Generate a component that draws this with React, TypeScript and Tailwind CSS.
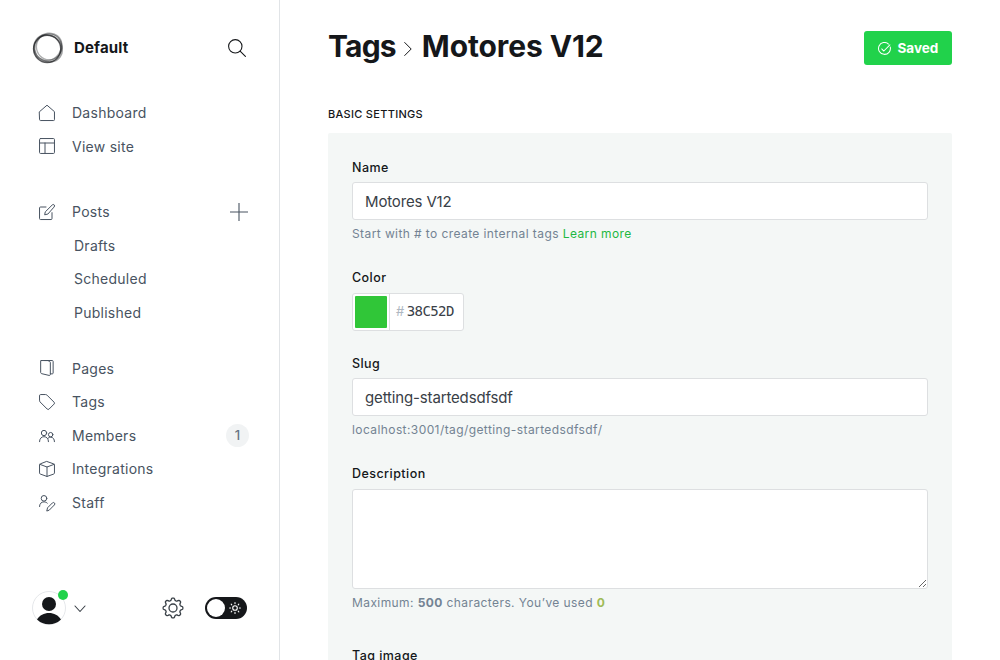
import React from 'react';

type IconProps = { children: React.ReactNode; className?: string };

function Icon({ children, className = '' }: IconProps) {
  return (
    <svg
      viewBox="0 0 24 24"
      fill="none"
      stroke="currentColor"
      strokeWidth="1.5"
      strokeLinecap="round"
      strokeLinejoin="round"
      className={`size-4 shrink-0 overflow-visible ${className}`}
    >
      {children}
    </svg>
  );
}

const icons = {
  home: <path d="M.8 10 12 .3 23.200 10v12a1.300 1.300 0 0 1-1.300 1.300H2.100A1.300 1.300 0 0 1 .8 22z" />,
  layout: (
    <>
      <rect x=".8" y=".8" width="22.400" height="22.400" rx="1.500" />
      <path d="M.8 7.500h22.400M9 7.500v15.700" />
    </>
  ),
  edit: (
    <>
      <path d="M12.800 15.200l-4.300 1 .9-4.400L19.900 1.400a2.050 2.050 0 0 1 2.900 2.900z" />
      <path d="M19.500 13v8.800a1.500 1.500 0 0 1-1.500 1.500H2.300a1.500 1.500 0 0 1-1.500-1.500V6a1.500 1.500 0 0 1 1.500-1.500h8.200" />
    </>
  ),
  pages: (
    <>
      <path d="M3.300.8h10.200l2.500 1.500c.7.300 1 .8 1 1.500v17.700c0 1.300-.8 2-2 1.600L4 20.500c-.9-.3-1.500-.9-1.500-1.700V1.600c0-.5.3-.8.8-.8z" />
      <path d="M8.500.8h11.500c.7 0 1.200.5 1.200 1.200v17.500c0 .8-.5 1.300-1.200 1.300h-3" />
    </>
  ),
  tag: <path d="M.8 2.300A1.500 1.500 0 0 1 2.300.8h7.500c.8 0 1.600.3 2.200.9l10.600 10.600a2 2 0 0 1 0 2.800l-7.500 7.500a2 2 0 0 1-2.800 0L1.700 12A3 3 0 0 1 .8 9.800z" />,
  members: (
    <>
      <circle cx="7.500" cy="7.500" r="4" />
      <path d="M.8 20.500c0-4.500 2.700-7.500 6.700-7.500s6.700 3 6.700 7.500" />
      <circle cx="17.500" cy="10" r="3.300" />
      <path d="M14 15c1-.8 2.200-1.200 3.500-1.200 3.500 0 5.700 2.700 5.700 6.700" />
    </>
  ),
  box: (
    <>
      <path d="M12 .8 22 4.300c.8.300 1.200.8 1.200 1.600v12c0 .8-.5 1.400-1.200 1.700L12 23.200 2 19.600c-.8-.3-1.200-.9-1.200-1.700v-12c0-.8.5-1.300 1.200-1.600z" />
      <path d="M1.300 5 12 9l10.700-4M12 9v14.200" />
    </>
  ),
  staff: (
    <>
      <circle cx="7.500" cy="5" r="4.200" />
      <path d="M.8 17.300c0-4.300 2.700-7 6.700-7 2 0 3.700.7 4.900 1.900" />
      <path d="M11.800 23.500l1-4.300 7.300-7.300a2.100 2.100 0 0 1 3 3L15.800 22.300z" />
    </>
  ),
};

type NavItemProps = { icon: React.ReactNode; label: string; iconClass?: string; children?: React.ReactNode };

function NavItem({ icon, label, iconClass, children }: NavItemProps) {
  return (
    <a className="flex h-[33.5px] items-center pl-[39px] pr-[30px]">
      <Icon className={iconClass}>{icon}</Icon>
      <span className="ml-[17px] flex-1 pb-[0.5px]">{label}</span>
      {children}
    </a>
  );
}

function SubItem({ label }: { label: string }) {
  return <a className="flex h-[33.5px] items-center pb-[0.5px] pl-[74px]">{label}</a>;
}

function Logo() {
  return (
    <svg viewBox="0 0 32 32" className="size-8" fill="none" stroke="#15171a">
      <circle cx="15.200" cy="16.800" r="13.600" strokeWidth="1.500" opacity=".7" />
      <ellipse cx="17.200" cy="14.800" rx="12.800" ry="13" strokeWidth="1.300" opacity=".35" />
      <ellipse cx="16.800" cy="15.500" rx="14.400" ry="12.800" strokeWidth="1.800" opacity=".35" transform="rotate(-50 16 16)" />
      <ellipse cx="16.300" cy="16.200" rx="14.700" ry="13" strokeWidth="1.500" opacity=".4" transform="rotate(35 16 16)" />
    </svg>
  );
}

const gearPath =
  Array.from({ length: 97 }, (_, i) => {
    const a = (i / 96) * Math.PI * 2;
    const r = 10.1 + 1.25 * Math.tanh(2.2 * Math.cos(8 * a));
    return `${i ? 'L' : 'M'}${(12 + r * Math.sin(a)).toFixed(2)} ${(12 - r * Math.cos(a)).toFixed(2)}`;
  }).join('') + 'Z';

function Sidebar() {
  return (
    <aside className="flex h-full w-[280px] shrink-0 flex-col border-r border-[#e1e4e7] bg-white text-[14px] tracking-[0.26px] text-[#485361]">
      <div className="flex h-24 items-center pl-8 pr-[33px]">
        <Logo />
        <span className="ml-[10px] flex-1 text-[15px] font-bold tracking-[0.15px] text-[#15171a]">Default</span>
        <svg viewBox="0 0 18 18" className="size-[18px] text-[#15171a]" fill="none" stroke="currentColor" strokeWidth="1.100" strokeLinecap="round">
          <circle cx="7.300" cy="7.300" r="6.700" />
          <path d="m12.100 12.100 5.300 5.300" />
        </svg>
      </div>
      <nav className="flex flex-1 flex-col pt-[0.25px]">
        <div>
          <NavItem icon={icons.home} label="Dashboard" />
          <NavItem icon={icons.layout} label="View site" iconClass="mb-[1.5px]" />
        </div>
        <div className="mt-8">
          <NavItem icon={icons.edit} label="Posts">
            <svg viewBox="0 0 18 18" className="mr-px size-[18px]" stroke="currentColor" strokeWidth="1.100">
              <path d="M9 0v18M0 9h18" />
            </svg>
          </NavItem>
          <SubItem label="Drafts" />
          <SubItem label="Scheduled" />
          <SubItem label="Published" />
        </div>
        <div className="mt-[22.5px]">
          <NavItem icon={icons.pages} label="Pages" iconClass="mb-[1.5px]" />
          <NavItem icon={icons.tag} label="Tags" />
          <NavItem icon={icons.members} label="Members">
            <span className="flex size-[23px] items-center justify-center rounded-full bg-[#f1f3f4] text-[13px] font-medium tracking-normal text-[#667482]">1</span>
          </NavItem>
          <NavItem icon={icons.box} label="Integrations" />
          <NavItem icon={icons.staff} label="Staff" />
        </div>
      </nav>
      <div className="flex h-[104px] items-center pl-8 pr-8 text-[#15171a]">
        <div className="relative size-[34px]">
          <svg viewBox="0 0 34 34" className="size-[34px]">
            <circle cx="17" cy="17" r="16.500" fill="#fff" stroke="#e5e7ea" />
            <circle cx="17" cy="13" r="7" fill="#15171a" />
            <path d="M5 28.500C7.600 24.300 12 22 17 22s9.400 2.300 12 6.500A17 17 0 0 1 17 33.300 17 17 0 0 1 5 28.500z" fill="#15171a" />
          </svg>
          <span className="absolute -right-[2px] -top-[1px] size-[10px] rounded-full bg-[#21d24b]" />
        </div>
        <svg viewBox="0 0 12 8" className="ml-2 mt-px h-2 w-3" fill="none" stroke="#394047" strokeWidth="1.100" strokeLinecap="round" strokeLinejoin="round">
          <path d="m1 1 5 5.500L11 1" />
        </svg>
        <svg viewBox="0 0 24 24" className="ml-[76px] size-[22px]" fill="none" stroke="#394047" strokeWidth="1.500" strokeLinejoin="round">
          <g transform="translate(12 12) scale(.95) translate(-12 -12)">
            <path d={gearPath} />
            <circle cx="12" cy="12" r="4.600" />
          </g>
        </svg>
        <span className="ml-[21px] flex h-[22px] w-[42px] items-center rounded-full bg-[#15171a] pl-0.5">
          <span className="size-[18px] rounded-full bg-white" />
          <svg viewBox="0 0 12 12" className="ml-1 size-3" fill="none" stroke="#fff" strokeWidth="1.100" strokeLinecap="round">
            <circle cx="6" cy="6" r="2.300" />
            <path d="M6 .6v1M6 10.400v1M.6 6h1M10.400 6h1M2.200 2.200l.6.6M9.200 9.200l.6.6M2.200 9.800l.6-.6M9.200 2.800l.6-.6" />
          </svg>
        </span>
      </div>
    </aside>
  );
}

function Label({ children }: { children: React.ReactNode }) {
  return <label className="block h-4 pt-px text-[12.5px] font-[550] leading-4 tracking-[0.45px] text-[#15171a]">{children}</label>;
}

function Hint({ children }: { children: React.ReactNode }) {
  return <p className="mt-1.5 h-4 whitespace-nowrap text-[12px] leading-4 tracking-[0.41px] text-[#738393]">{children}</p>;
}

const fieldClass =
  'block w-full rounded-[3px] border border-[#dddfe1] bg-white px-3 text-[15px] tracking-[-0.15px] text-[#394047] outline-none';

export default function App() {
  return (
    <div className="flex h-[660px] w-[1000px] overflow-hidden bg-white font-['Inter',sans-serif]">
      <Sidebar />
      <main className="flex-1 pl-12 pr-12">
        <header className="flex h-24 items-center justify-between">
          <h1 className="flex items-center pb-[4px] text-[30px] font-bold leading-9 text-[#15171a]">
            <span className="tracking-[-0.8px]">Tags</span>
            <svg viewBox="0 0 8 14" className="ml-[8px] mr-[10px] mt-[6px] h-[14px] w-2" fill="none" stroke="currentColor" strokeWidth="1" strokeLinecap="round" strokeLinejoin="round">
              <path d="m.7.5 6.500 6.500-6.500 6.500" />
            </svg>
            <span className="tracking-[-0.1px]">Motores V12</span>
          </h1>
          <button className="flex h-[34px] w-[88px] items-center rounded-[3px] bg-[#21d24b] pl-[14px] text-[13.5px] font-bold text-white">
            <svg viewBox="0 0 14 14" className="mr-[6.5px] size-[13px]" fill="none" stroke="currentColor" strokeWidth="1.100" strokeLinecap="round" strokeLinejoin="round">
              <path d="M13.200 5.400A6.400 6.400 0 1 1 11.300 2.200" />
              <path d="m4 7.500 2.300 2.200 6.500-6.500" />
            </svg>
            Saved
          </button>
        </header>
        <h2 className="mt-[10px] h-4 text-[11px] font-medium leading-4 tracking-[0.3px] text-[#15171a]">BASIC SETTINGS</h2>
        <section className="mt-[11px] h-[600px] rounded-[2px] bg-[#f4f7f6] px-6 pt-[26px]">
          <div className="h-[110px]">
            <Label>Name</Label>
            <input className={`${fieldClass} mt-[7px] h-[38px]`} defaultValue="Motores V12" />
            <Hint>
              Start with # to create internal tags <a className="text-[#1fb842]">Learn more</a>
            </Hint>
          </div>
          <div className="h-[86px]">
            <Label>Color</Label>
            <div className="mt-2 flex h-[38px] w-28 items-center rounded-[3px] border border-[#dddfe1] bg-white">
              <div className="flex h-full w-[37px] items-center border-r border-[#dddfe1] pl-0.5">
                <span className="size-8 rounded-[1px] bg-[#30c638]" />
              </div>
              <span className="ml-1.5 text-[13px] text-[#aeb7c1]">#</span>
              <span className="mb-px ml-[2.5px] font-['DejaVu_Sans_Mono',monospace] text-[14px] tracking-[-0.6px] text-[#394047]">38C52D</span>
            </div>
          </div>
          <div className="h-[110px]">
            <Label>Slug</Label>
            <input className={`${fieldClass} mt-[7px] h-[38px]`} defaultValue="getting-startedsdfsdf" />
            <Hint>localhost:3001/tag/getting-startedsdfsdf/</Hint>
          </div>
          <div className="h-[182px]">
            <Label>Description</Label>
            <textarea className={`${fieldClass} mt-[8px] h-[100px] resize`} />
            <Hint>
              Maximum: <b className="font-bold">500</b> characters. You’ve used <b className="font-bold text-[#9fbb58]">0</b>
            </Hint>
          </div>
          <Label>Tag image</Label>
        </section>
      </main>
    </div>
  );
}
